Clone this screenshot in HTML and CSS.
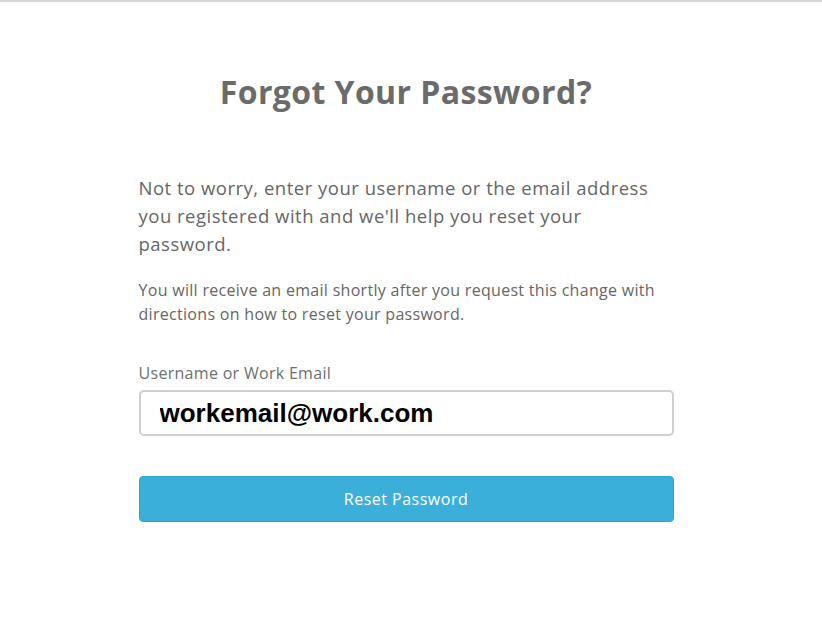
FILE: index.html
```html
<!DOCTYPE html>
<html lang="en">
<head>
<meta charset="utf-8">
<title>Forgot Your Password?</title>
<link rel="stylesheet" href="styles.css">
</head>
<body>
<div class="topbar"></div>
<main class="page">
  <h1 class="title">Forgot Your Password?</h1>
  <form class="form">
    <p class="lead">Not to worry, enter your username or the email address you registered with and we'll help you reset your password.</p>
    <p class="note">You will receive an email shortly after you request this change with directions on how to reset your password.</p>
    <label class="label" for="user">Username or Work Email</label>
    <input class="input" id="user" type="text" value="workemail@work.com">
    <button class="button" type="button">Reset Password</button>
  </form>
</main>
</body>
</html>
```
FILE: styles.css
```css
html, body {
  margin: 0;
  padding: 0;
  background: #ffffff;
}
body {
  font-family: "Open Sans", "Noto Sans", sans-serif;
  color: #666666;
}
.topbar {
  height: 2px;
  background: #d3d7dc;
}
.page {
  display: flex;
  flex-direction: column;
  align-items: center;
  padding-right: 10px;
}
.title {
  margin: 68px 0 0 0;
  font-size: 32px;
  line-height: 44px;
  font-weight: 700;
  letter-spacing: 0.4px;
  color: #6b6b6b;
}
.form {
  width: 535px;
  margin: 60px 0 0 0;
  display: flex;
  flex-direction: column;
}
.lead {
  margin: 0;
  font-size: 18.5px;
  line-height: 28px;
  letter-spacing: 0.5px;
  color: #666666;
}
.note {
  margin: 20px 0 0 0;
  font-size: 16px;
  line-height: 24px;
  letter-spacing: 0.3px;
  color: #666666;
}
.label {
  margin-top: 36px;
  font-size: 16px;
  line-height: 22px;
  letter-spacing: 0.3px;
  color: #6e6e6e;
}
.input {
  margin-top: 6px;
  box-sizing: border-box;
  width: 535px;
  height: 46px;
  border: 2px solid #cfcfcf;
  border-radius: 5px;
  padding: 0 19px;
  font-family: "Liberation Sans", Arial, sans-serif;
  font-weight: 700;
  font-size: 26px;
  color: #000000;
  outline: none;
}
.button {
  margin-top: 40px;
  box-sizing: border-box;
  width: 535px;
  height: 46px;
  background: #3aafda;
  border: 1px solid #2aa3d0;
  border-radius: 4px;
  color: #ffffff;
  font-family: "Open Sans", "Noto Sans", sans-serif;
  font-size: 16px;
  letter-spacing: 0.5px;
  cursor: pointer;
}
```
